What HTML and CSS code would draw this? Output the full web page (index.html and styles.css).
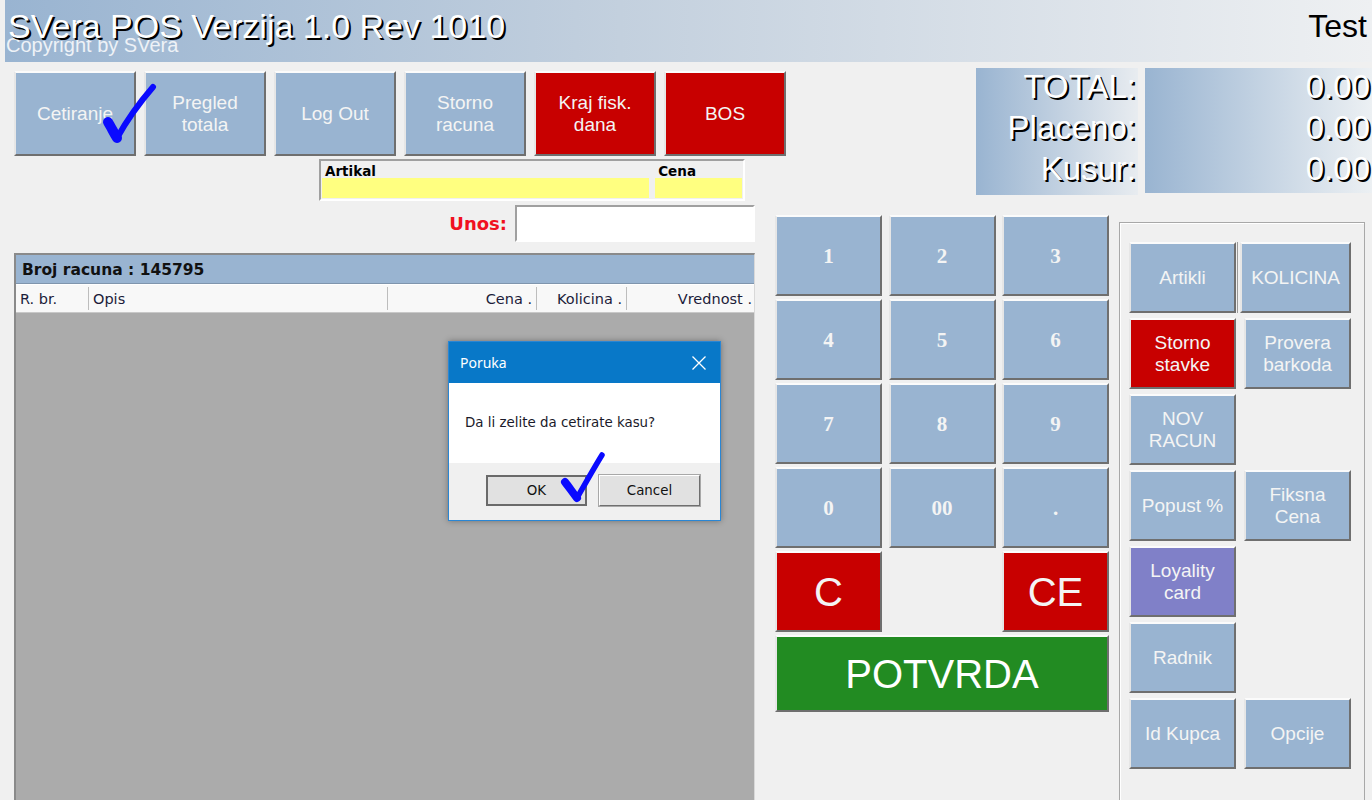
FILE: index.html
```html
<!DOCTYPE html>
<html lang="sr">
<head>
    <meta charset="UTF-8">
    <meta name="viewport" content="width=device-width, initial-scale=1.0">
    <title>SVera POS</title>
    <link rel="stylesheet" href="styles.css">
</head>
<body>
    <!-- Title bar -->
    <div class="titlebar">
        <div class="brand">
            <div class="title">SVera POS Verzija 1.0 Rev 1010</div>
            <div class="copyright">Copyright by SVera</div>
        </div>
        <div class="user">Test</div>
    </div>

    <div class="main">
        <!-- Left side: toolbar, article, input, receipt grid -->
        <div class="left">
            <div class="toolbar">
                <div class="btn tbtn">Cetiranje</div>
                <div class="btn tbtn">Pregled<br>totala</div>
                <div class="btn tbtn">Log Out</div>
                <div class="btn tbtn">Storno<br>racuna</div>
                <div class="btn tbtn red">Kraj fisk.<br>dana</div>
                <div class="btn tbtn red">BOS</div>
            </div>

            <div class="artikal">
                <div class="afield afield-name">
                    <div class="alabel">Artikal</div>
                    <div class="ayellow"></div>
                </div>
                <div class="afield afield-price">
                    <div class="alabel">Cena</div>
                    <div class="ayellow"></div>
                </div>
            </div>

            <div class="unos">
                <span class="unos-label">Unos:</span>
                <div class="unos-input"></div>
            </div>

            <div class="grid">
                <div class="grid-title">Broj racuna : 145795</div>
                <div class="grid-cols">
                    <div class="col col-rbr">R. br.</div>
                    <div class="col col-opis">Opis</div>
                    <div class="col col-cena num">Cena .</div>
                    <div class="col col-kol num">Kolicina .</div>
                    <div class="col col-vred num">Vrednost .</div>
                </div>
                <div class="grid-body"></div>
            </div>
        </div>

        <!-- Right side: totals, numpad, function buttons -->
        <div class="right">
            <div class="totals">
                <div class="tot-labels">
                    <div>TOTAL:</div>
                    <div>Placeno:</div>
                    <div>Kusur:</div>
                </div>
                <div class="tot-values">
                    <div>0.00</div>
                    <div>0.00</div>
                    <div>0.00</div>
                </div>
            </div>

            <div class="lower">
                <div class="numpad">
                    <div class="btn key">1</div>
                    <div class="btn key">2</div>
                    <div class="btn key">3</div>
                    <div class="btn key">4</div>
                    <div class="btn key">5</div>
                    <div class="btn key">6</div>
                    <div class="btn key">7</div>
                    <div class="btn key">8</div>
                    <div class="btn key">9</div>
                    <div class="btn key">0</div>
                    <div class="btn key">00</div>
                    <div class="btn key">.</div>
                    <div class="btn key big red">C</div>
                    <div></div>
                    <div class="btn key big red">CE</div>
                    <div class="btn potvrda">POTVRDA</div>
                </div>

                <div class="side">
                    <div class="side-grid">
                        <div class="btn sbtn">Artikli</div>
                        <div class="btn sbtn kolicina">KOLICINA</div>
                        <div class="btn sbtn red">Storno<br>stavke</div>
                        <div class="btn sbtn">Provera<br>barkoda</div>
                        <div class="btn sbtn">NOV<br>RACUN</div>
                        <div></div>
                        <div class="btn sbtn">Popust %</div>
                        <div class="btn sbtn">Fiksna<br>Cena</div>
                        <div class="btn sbtn purple">Loyality<br>card</div>
                        <div></div>
                        <div class="btn sbtn">Radnik</div>
                        <div></div>
                        <div class="btn sbtn">Id Kupca</div>
                        <div class="btn sbtn">Opcije</div>
                    </div>
                </div>
            </div>
        </div>
    </div>

    <!-- Message box -->
    <div class="dialog">
        <div class="dlg-title">
            <span>Poruka</span>
            <svg class="dlg-close" width="16" height="16" viewBox="0 0 16 16">
                <path d="M1.5 1.5 L14.5 14.5 M14.5 1.5 L1.5 14.5" stroke="#fff" stroke-width="1.3" fill="none"/>
            </svg>
        </div>
        <div class="dlg-body">Da li zelite da cetirate kasu?</div>
        <div class="dlg-footer">
            <div class="dlg-btn dlg-ok">OK</div>
            <div class="dlg-btn">Cancel</div>
        </div>
    </div>

    <!-- Hand drawn check marks -->
    <svg class="check check-1" width="64" height="66" viewBox="0 0 64 66">
        <path d="M8 42 C11 47 14 53 17 58" stroke="#0a0aff" stroke-width="10" stroke-linecap="round" fill="none"/>
        <path d="M17 58 C27 40 40 22 53 7" stroke="#0a0aff" stroke-width="6" stroke-linecap="round" fill="none"/>
    </svg>
    <svg class="check check-2" width="52" height="56" viewBox="0 0 52 56">
        <path d="M7 34 C11 39 15 45 19 50" stroke="#0a0aff" stroke-width="8" stroke-linecap="round" fill="none"/>
        <path d="M19 50 C27 36 36 20 44 7" stroke="#0a0aff" stroke-width="5.5" stroke-linecap="round" fill="none"/>
    </svg>
</body>
</html>
```

FILE: styles.css
```css
* {
    margin: 0;
    padding: 0;
    box-sizing: border-box;
}

body {
    width: 1372px;
    height: 800px;
    overflow: hidden;
    position: relative;
    background: #f0f0f0;
    font-family: 'Liberation Sans', Arial, sans-serif;
}

/* Title bar */
.titlebar {
    height: 62px;
    margin-left: 5px;
    display: flex;
    justify-content: space-between;
    background: linear-gradient(90deg, #99b4d1 0%, #c3d0de 45%, #eef0f2 100%);
}

.title {
    padding: 9px 0 0 3px;
    font-size: 34px;
    line-height: 34px;
    color: #fff;
    text-shadow: 2px 2px 0 #000;
    white-space: nowrap;
    position: relative;
    z-index: 2;
}

.copyright {
    margin-top: -8px;
    padding-left: 1px;
    font-size: 20px;
    line-height: 20px;
    color: #eef2f7;
    white-space: nowrap;
}

.user {
    padding: 10px 5px 0 0;
    font-size: 32px;
    line-height: 32px;
    color: #000;
}

/* Layout */
.main {
    display: flex;
}

.left {
    width: 770px;
    flex: none;
    padding-left: 14px;
}

.right {
    width: 602px;
    flex: none;
    display: flex;
    flex-direction: column;
}

/* Buttons */
.btn {
    display: flex;
    align-items: center;
    justify-content: center;
    text-align: center;
    background: #99b4d1;
    color: #f4f4f4;
    border: 2px solid;
    border-color: #fbfbfb #6f6f6f #6f6f6f #e6e6e6;
    font-size: 19px;
    line-height: 22px;
}

.btn.red {
    background: #c80000;
}

.btn.purple {
    background: #8080c8;
}

.toolbar {
    display: flex;
    gap: 8px;
    margin-top: 9px;
}

.tbtn {
    width: 122px;
    height: 85px;
    flex: none;
}

/* Article box */
.artikal {
    margin: 3px 0 0 305px;
    width: 426px;
    height: 42px;
    display: flex;
    gap: 6px;
    padding: 0 1px 1px 1px;
    border: 2px solid;
    border-color: #a0a0a0 #ffffff #ffffff #a0a0a0;
}

.afield {
    display: flex;
    flex-direction: column;
}

.afield-name { width: 328px; }
.afield-price { width: 87px; }

.alabel {
    height: 17px;
    padding-left: 3px;
    font-family: 'DejaVu Sans', sans-serif;
    font-weight: bold;
    font-size: 13.5px;
    line-height: 20px;
    color: #000;
}

.ayellow {
    height: 20px;
    background: #ffff80;
}

/* Input row */
.unos {
    width: 741px;
    margin-top: 4px;
    display: flex;
    justify-content: flex-end;
    align-items: center;
    gap: 8px;
}

.unos-label {
    font-family: 'DejaVu Sans', sans-serif;
    font-weight: bold;
    font-size: 18px;
    color: #f01020;
}

.unos-input {
    width: 240px;
    height: 37px;
    background: #fff;
    border: 2px solid;
    border-color: #a0a0a0 #ffffff #ffffff #a0a0a0;
}

/* Receipt grid */
.grid {
    width: 741px;
    height: 560px;
    margin-top: 11px;
    border-top: 2px solid #8a8a8a;
    border-left: 2px solid #8a8a8a;
    border-right: 1px solid #d8d8d8;
    display: flex;
    flex-direction: column;
    font-family: 'DejaVu Sans', sans-serif;
}

.grid-title {
    height: 29px;
    background: #99b4d1;
    padding-left: 6px;
    font-weight: bold;
    font-size: 15.5px;
    line-height: 30px;
    color: #111;
    border-bottom: 1px solid #7f95ad;
}

.grid-cols {
    height: 29px;
    display: flex;
    background: #f8f8f8;
    border-top: 1px solid #ffffff;
    border-bottom: 1px solid #c8c8c8;
}

.col {
    font-size: 14.5px;
    line-height: 25px;
    color: #1c1c3a;
    padding: 0 4px;
    border-right: 1px solid #bdbdbd;
    margin: 2px 0 2px;
    white-space: nowrap;
}

.col.num {
    text-align: right;
}

.col-rbr { width: 73px; }
.col-opis { width: 299px; }
.col-cena { width: 149px; }
.col-kol { width: 90px; }
.col-vred { width: 127px; border-right: none; padding-right: 2px; }

.grid-body {
    flex: 1;
    background: #ababab;
}

/* Totals */
.totals {
    margin: 6px 0 0 206px;
    display: flex;
    gap: 7px;
    font-size: 33px;
    line-height: 41px;
    color: #fff;
    text-shadow: 2px 2px 0 #000;
}

.tot-labels {
    width: 162px;
    height: 127px;
    text-align: right;
    padding-right: 2px;
    background: linear-gradient(90deg, #99b4d1 0%, #e8ecf0 100%);
}

.tot-values {
    width: 227px;
    height: 125px;
    text-align: right;
    padding-right: 2px;
    background: linear-gradient(90deg, #99b4d1 0%, #ecf0f3 100%);
}

.tot-labels div:first-child,
.tot-values div:first-child {
    margin-top: -2px;
}

/* Numeric keypad */
.lower {
    display: flex;
    align-items: flex-start;
    margin-top: 20px;
}

.numpad {
    margin-left: 5px;
    display: grid;
    grid-template-columns: repeat(3, 107px);
    grid-template-rows: repeat(5, 81px) 77px;
    gap: 3px 6.5px;
}

.key {
    font-family: 'Liberation Serif', 'Times New Roman', serif;
    font-weight: bold;
    font-size: 21px;
}

.key.big {
    font-family: 'Liberation Sans', Arial, sans-serif;
    font-weight: normal;
    font-size: 40px;
}

.potvrda {
    grid-column: 1 / 4;
    background: #228b22;
    color: #fff;
    font-size: 40px;
}

/* Function buttons */
.side {
    width: 246px;
    height: 600px;
    margin: 7px 0 0 10px;
    border: 1px solid #a8a8a8;
    box-shadow: inset 1px 1px 0 #ffffff;
    padding: 19px 0 0 9px;
}

.side-grid {
    display: grid;
    grid-template-columns: repeat(2, 107px);
    grid-auto-rows: 71px;
    gap: 5px 8px;
}

.sbtn.kolicina {
    margin-left: -4px;
    box-shadow: -2px 0 0 #f0f0f0, -3px 0 0 #9a9a9a;
}

/* Message box */
.dialog {
    position: absolute;
    left: 448px;
    top: 341px;
    width: 273px;
    height: 180px;
    border: 1px solid #2a86d4;
    background: #f0f0f0;
    box-shadow: 0 0 6px rgba(0, 0, 0, 0.35);
    display: flex;
    flex-direction: column;
}

.dlg-title {
    height: 41px;
    background: #0878c8;
    color: #fff;
    font-family: 'Noto Sans', 'Open Sans', sans-serif;
    font-size: 14px;
    display: flex;
    align-items: center;
    justify-content: space-between;
    padding: 0 13px 0 11px;
}

.dlg-close {
    margin-top: 1px;
}

.dlg-body {
    height: 80px;
    background: #fff;
    padding-left: 16px;
    font-family: 'DejaVu Sans', sans-serif;
    font-size: 13.4px;
    line-height: 80px;
    color: #1a1a2a;
}

.dlg-footer {
    flex: 1;
    display: flex;
    gap: 12px;
    padding: 12px 0 0 37px;
}

.dlg-btn {
    width: 101px;
    height: 31px;
    background: #e1e1e1;
    border: 1px solid;
    border-color: #ffffff #6f6f6f #6f6f6f #ffffff;
    box-shadow: 0 0 0 1px #a8a8a8;
    display: flex;
    align-items: center;
    justify-content: center;
    font-family: 'DejaVu Sans', sans-serif;
    font-size: 13.4px;
    color: #111;
}

.dlg-ok {
    border: 2px solid #6a6a6a;
    box-shadow: none;
}

/* Check marks */
.check {
    position: absolute;
}

.check-1 {
    left: 100px;
    top: 80px;
}

.check-2 {
    left: 558px;
    top: 448px;
}
```
